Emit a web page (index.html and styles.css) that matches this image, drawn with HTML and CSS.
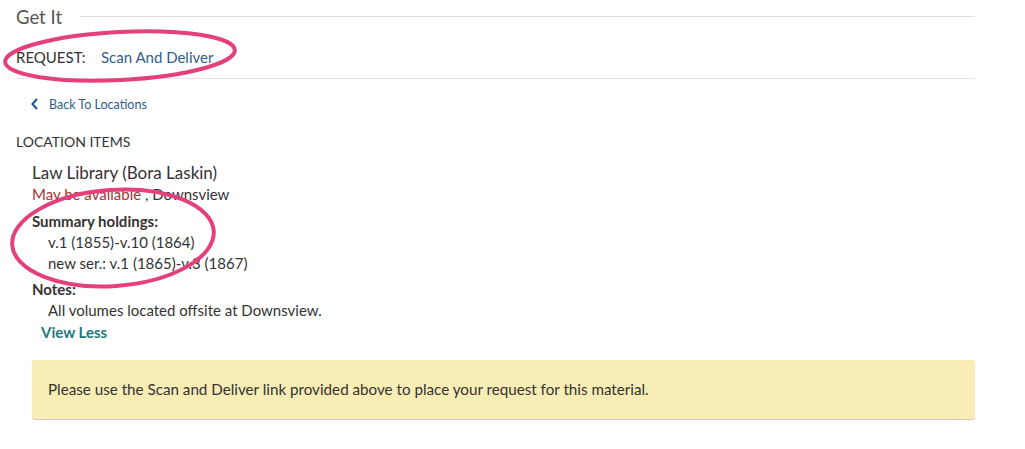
FILE: index.html
```html
<!DOCTYPE html>
<html>
<head>
<meta charset="utf-8">
<link rel="stylesheet" href="styles.css">
</head>
<body>
<div class="page">
  <div class="section-title">
    <h2>Get It</h2>
    <span class="rule"></span>
  </div>
  <div class="request-row">
    <span class="req-label">REQUEST:</span>
    <a class="req-link">Scan And Deliver</a>
  </div>
  <div class="back-row">
    <svg class="chev" width="10" height="12" viewBox="0 0 10 12"><path d="M7 1 L2.5 6 L7 11" fill="none" stroke="#2a5a8c" stroke-width="2.2"/></svg>
    <a class="back-link">Back To Locations</a>
  </div>
  <div class="loc-items">LOCATION ITEMS</div>
  <div class="library">
    <div class="lib-name">Law Library (Bora Laskin)</div>
    <div class="lib-status"><span class="avail">May be available</span> , Downsview</div>
    <div class="field-label">Summary holdings:</div>
    <div class="field-value">v.1 (1855)-v.10 (1864)</div>
    <div class="field-value">new ser.: v.1 (1865)-v.3 (1867)</div>
    <div class="field-label notes">Notes:</div>
    <div class="field-value">All volumes located offsite at Downsview.</div>
    <a class="view-less">View Less</a>
    <div class="alert">Please use the Scan and Deliver link provided above to place your request for this material.</div>
  </div>
</div>
<svg class="annot" width="1025" height="449" viewBox="0 0 1025 449">
  <ellipse cx="120" cy="56" rx="115" ry="24" transform="rotate(-3 120 56)" fill="none" stroke="#e3407c" stroke-width="4"/>
  <ellipse cx="113" cy="238" rx="101" ry="48" transform="rotate(-4 113 238)" fill="none" stroke="#e3407c" stroke-width="4"/>
</svg>
</body>
</html>
```

FILE: styles.css
```css
html, body {
  margin: 0;
  padding: 0;
  background: #fff;
}
body {
  font-family: "Lato", "Open Sans", sans-serif;
  color: #333;
  position: relative;
  width: 1025px;
  height: 449px;
  overflow: hidden;
}
.page {
  padding: 0 50px 0 16px;
}
.section-title {
  display: flex;
  align-items: center;
  height: 34px;
}
.section-title h2 {
  margin: 0;
  font-weight: 400;
  font-size: 18.5px;
  color: #555;
}
.section-title .rule {
  flex: 1;
  height: 1px;
  background: #dedede;
  margin-left: 18px;
  margin-top: -1px;
}
.request-row {
  display: flex;
  align-items: center;
  height: 42px;
  padding-top: 2px;
  border-bottom: 1px solid #e4e4e4;
  font-size: 15px;
}
.req-label {
  color: #333;
  width: 85px;
}
.req-link {
  color: #2f5d8a;
  font-size: 15px;
}
.back-row {
  display: flex;
  align-items: center;
  margin: 15px 0 0 14px;
  height: 20px;
}
.chev {
  margin-right: 9px;
}
.back-link {
  font-size: 12.5px;
  color: #2f5d8a;
}
.loc-items {
  margin-top: 19px;
  font-size: 14px;
  color: #333;
}
.library {
  padding-left: 16px;
  margin-top: 12px;
}
.lib-name {
  font-size: 17px;
  color: #333;
  line-height: 22px;
}
.lib-status {
  font-size: 15px;
  line-height: 20px;
  color: #333;
}
.avail {
  color: #a83232;
}
.field-label {
  font-weight: 700;
  font-size: 15px;
  line-height: 21px;
  margin-top: 7px;
  color: #333;
}
.field-label.notes {
  margin-top: 5px;
}
.field-value {
  font-size: 15px;
  line-height: 21px;
  padding-left: 16px;
  color: #333;
}
.view-less {
  display: block;
  font-size: 15px;
  font-weight: 700;
  color: #1f7a7a;
  padding-left: 9px;
  line-height: 22px;
}
.alert {
  margin-top: 17px;
  background: #f8edb4;
  border-radius: 3px;
  box-shadow: 0 1px 1px #c9c9c9;
  padding: 19px 16px;
  font-size: 15.2px;
  line-height: 21px;
  color: #333;
}
.annot {
  position: absolute;
  left: 0;
  top: 0;
  pointer-events: none;
}
```
